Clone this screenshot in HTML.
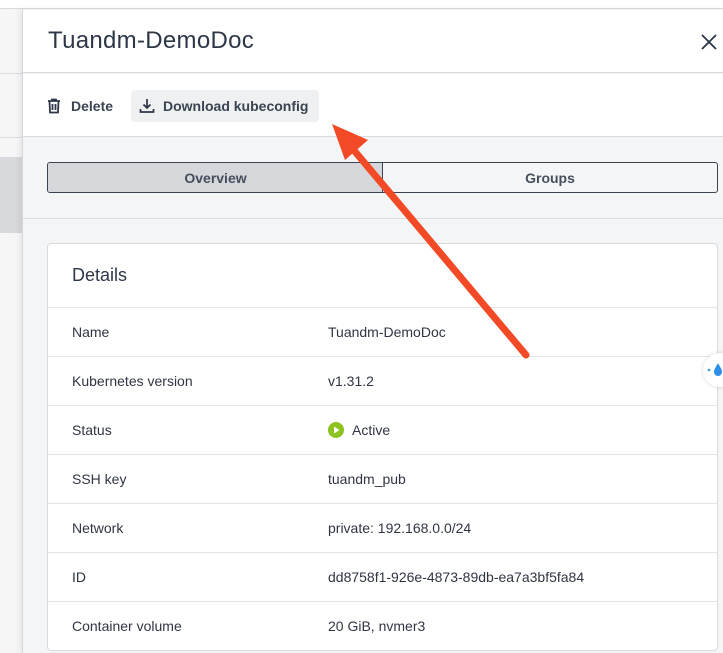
<!DOCTYPE html>
<html><head><style>
*{margin:0;padding:0;box-sizing:border-box}
body{width:723px;height:653px;overflow:hidden;background:#f4f5f6;font-family:"Liberation Sans",sans-serif;color:#2d3748;position:relative}
.a{position:absolute}
.row{position:absolute;left:0;right:0;height:49px;border-top:1px solid #e2e4e7;font-size:14px;color:#2f3542}
.row span{position:absolute;top:16px}
.l{left:24px}.v{left:280px}
</style></head><body>
<div class="a" style="left:0;top:0;width:723px;height:9px;background:#fff;border-bottom:1px solid #d8dadd"></div>
<div class="a" style="left:0;top:9px;width:22px;height:644px;background:#f6f6f7"></div>
<div class="a" style="left:0;top:73px;width:22px;height:1px;background:#dcdde0"></div>
<div class="a" style="left:0;top:137px;width:22px;height:1px;background:#dcdde0"></div>
<div class="a" style="left:0;top:157px;width:22px;height:76px;background:#d8d9dc"></div>
<div class="a" style="left:22px;top:9px;width:701px;height:644px;background:#f4f5f6;border-left:1px solid #d4d6d9;box-shadow:-3px 0 6px rgba(0,0,0,.06)"></div>
<div class="a" style="left:23px;top:10px;width:700px;height:63px;background:#fff;border-bottom:1px solid #d8dadd"></div>
<div class="a" style="left:48px;top:27px;font-size:24px;letter-spacing:0.3px;color:#2d3748">Tuandm-DemoDoc</div>
<svg class="a" style="left:700px;top:33px" width="18" height="18" viewBox="0 0 18 18"><path d="M2 2L16 16M16 2L2 16" stroke="#2d3748" stroke-width="1.8"/></svg>
<div class="a" style="left:23px;top:74px;width:700px;height:63px;background:#fff;border-bottom:1px solid #d8dadd"></div>
<svg class="a" style="left:47px;top:98px" width="14" height="16" viewBox="0 0 14 16"><path d="M1 3H13M5 3V1.5H9V3M2.5 3L3 14.5H11L11.5 3M5.5 6V12M8.5 6V12" stroke="#2d3748" stroke-width="1.8" fill="none"/></svg>
<div class="a" style="left:71px;top:98px;font-size:14px;font-weight:bold;color:#3b4452">Delete</div>
<div class="a" style="left:131px;top:90px;width:188px;height:32px;background:#eef0f1;border-radius:4px"></div>
<svg class="a" style="left:139px;top:98px" width="16" height="16" viewBox="0 0 16 16"><path d="M8 1V10M4.5 6.5L8 10L11.5 6.5M1.5 11V14H14.5V11" stroke="#2d3748" stroke-width="1.7" fill="none"/></svg>
<div class="a" style="left:163px;top:98px;font-size:14px;font-weight:bold;color:#3b4452">Download kubeconfig</div>
<div class="a" style="left:47px;top:162px;width:671px;height:31px;border:1px solid #3a4352;border-radius:3px;background:#f4f5f6;overflow:hidden">
<div class="a" style="left:0;top:0;width:335px;height:29px;background:#d5d7db;border-right:1px solid #3a4352"></div>
<div class="a" style="left:0;top:7px;width:335px;text-align:center;font-size:14px;font-weight:bold;color:#464e5c">Overview</div>
<div class="a" style="left:335px;top:7px;width:334px;text-align:center;font-size:14px;font-weight:bold;color:#464e5c">Groups</div>
</div>
<div class="a" style="left:23px;top:218px;width:700px;height:1px;background:#dcdee1"></div>
<div class="a" style="left:47px;top:243px;width:671px;height:408px;background:#fff;border:1px solid #d8dadd;border-radius:4px">
<div class="a" style="left:24px;top:21px;font-size:18px;color:#2d3748">Details</div>
<div class="row" style="top:63px"><span class="l">Name</span><span class="v">Tuandm-DemoDoc</span></div>
<div class="row" style="top:112px"><span class="l">Kubernetes version</span><span class="v">v1.31.2</span></div>
<div class="row" style="top:161px"><span class="l">Status</span><span class="v" style="left:304px">Active</span>
<svg class="a" style="left:280px;top:16px" width="16" height="16" viewBox="0 0 16 16"><circle cx="8" cy="8" r="8" fill="#8dc21f"/><path d="M6 4.5L11.5 8L6 11.5Z" fill="#fff"/></svg></div>
<div class="row" style="top:210px"><span class="l">SSH key</span><span class="v">tuandm_pub</span></div>
<div class="row" style="top:259px"><span class="l">Network</span><span class="v">private: 192.168.0.0/24</span></div>
<div class="row" style="top:308px"><span class="l">ID</span><span class="v">dd8758f1-926e-4873-89db-ea7a3bf5fa84</span></div>
<div class="row" style="top:357px"><span class="l">Container volume</span><span class="v">20 GiB, nvmer3</span></div>
</div>
<div class="a" style="left:703px;top:353px;width:34px;height:34px;border-radius:50%;background:#fff;box-shadow:0 0 4px rgba(0,0,0,.15)"></div>
<svg class="a" style="left:706px;top:360px" width="17" height="18" viewBox="0 0 17 18"><circle cx="3" cy="10" r="1.3" fill="#3b9be8"/><path d="M12 3C10 7 8 9 8 12A4 4 0 0 0 16 12C16 9 14 7 12 3Z" fill="#2e8fe6"/></svg>
<svg class="a" style="left:0;top:0" width="723" height="653"><path d="M526 355L352 148" stroke="#f24a26" stroke-width="7" stroke-linecap="round"/><path d="M332 124L368 140L345 160Z" fill="#f24a26"/></svg>
</body></html>
